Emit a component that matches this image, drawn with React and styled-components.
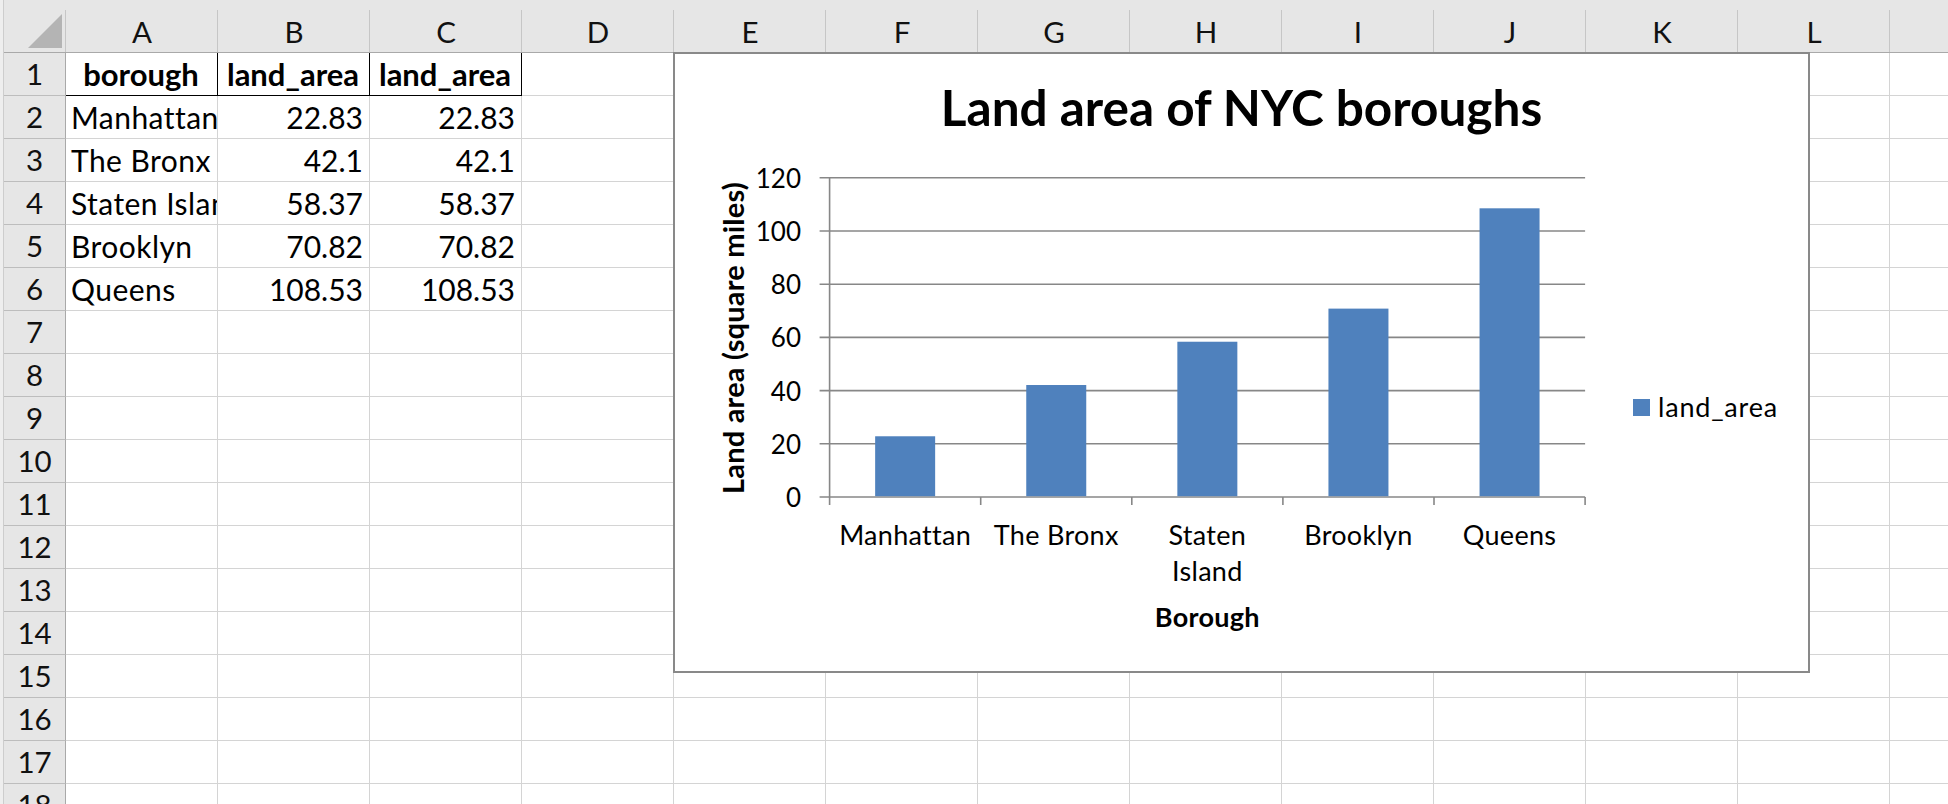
import React from "react";
import styled, { createGlobalStyle } from "styled-components";

const GlobalStyle = createGlobalStyle`
  html, body { margin: 0; padding: 0; background: #fff; }
  body { font-family: Lato, "Noto Sans", sans-serif; color: #000; overflow: hidden; }
`;

const COLS = ["A", "B", "C", "D", "E", "F", "G", "H", "I", "J", "K", "L", ""];
const ROW_COUNT = 18;
const DATA = [
  ["Manhattan", "22.83", "22.83", 22.83],
  ["The Bronx", "42.1", "42.1", 42.1],
  ["Staten Island", "58.37", "58.37", 58.37],
  ["Brooklyn", "70.82", "70.82", 70.82],
  ["Queens", "108.53", "108.53", 108.53],
];
const CATEGORY_LABELS = [["Manhattan"], ["The Bronx"], ["Staten", "Island"], ["Brooklyn"], ["Queens"]];

const Sheet = styled.div`
  position: relative;
  width: 1948px;
  height: 804px;
  overflow: hidden;
  display: grid;
  grid-template-columns: 4px 62px repeat(13, 152px);
  grid-template-rows: 53px repeat(${ROW_COUNT}, 43px);
`;

const Strip = styled.div`
  grid-row: 1 / -1;
  grid-column: 1;
  background: #eeeeee;
  border-right: 1px solid #cdcdcd;
  box-sizing: border-box;
`;

const HeaderBase = styled.div`
  position: relative;
  box-sizing: border-box;
  background: #e6e6e6;
  border-bottom: 1px solid #a9a9a9;
  &::after {
    content: "";
    position: absolute;
    right: 0;
    top: 10px;
    bottom: 0;
    width: 1px;
    background: #c6c6c6;
  }
`;

const Corner = styled(HeaderBase)`
  &::before {
    content: "";
    position: absolute;
    left: 24px;
    top: 14px;
    width: 34px;
    height: 34px;
    background: #b4b4b4;
    clip-path: polygon(100% 0, 100% 100%, 0 100%);
  }
`;

const ColHeader = styled(HeaderBase)`
  display: flex;
  align-items: flex-end;
  justify-content: center;
  padding-bottom: 3px;
  font-size: 29.5px;
  line-height: 35px;
  color: #111;
`;

const RowHeader = styled.div`
  box-sizing: border-box;
  background: #e6e6e6;
  border-right: 1px solid #a9a9a9;
  border-bottom: 1px solid #bdbdbd;
  display: flex;
  align-items: flex-end;
  justify-content: center;
  padding-bottom: 3px;
  font-size: 29.5px;
  line-height: 36px;
  color: #111;
`;

const Cell = styled.div`
  box-sizing: border-box;
  border-right: 1px solid ${(p) => (p.$boxed ? "#000" : "#d4d4d4")};
  border-bottom: 1px solid ${(p) => (p.$boxed ? "#000" : "#d4d4d4")};
  display: flex;
  align-items: flex-end;
  justify-content: ${(p) =>
    p.$align === "right" ? "flex-end" : p.$align === "center" ? "center" : "flex-start"};
  padding: 0 6px 3px 5px;
  font-size: ${(p) => (p.$bold ? "31px" : "30px")};
  letter-spacing: ${(p) => (p.$align === "left" ? "0.45px" : "0")};
  line-height: 36px;
  font-weight: ${(p) => (p.$bold ? 700 : 400)};
  white-space: nowrap;
  overflow: hidden;
`;

/* ---------- chart ---------- */

const ChartFrame = styled.div`
  position: absolute;
  left: 673px;
  top: 52px;
  width: 1137px;
  height: 621px;
  box-sizing: border-box;
  border: 2px solid #898989;
  background: #fff;
  display: flex;
  flex-direction: column;
`;

const ChartTitle = styled.div`
  padding-top: 24px;
  height: 82px;
  box-sizing: border-box;
  text-align: center;
  font-size: 49.5px;
  line-height: 58px;
  font-weight: 700;
`;

const ChartBody = styled.div`
  flex: 1;
  display: grid;
  grid-template-columns: 80px 846px 1fr;
`;

const YTitleCol = styled.div`
  padding: 42px 0 0 41px;
`;

const YTitle = styled.div`
  writing-mode: vertical-rl;
  transform: rotate(180deg);
  height: 320px;
  text-align: center;
  white-space: nowrap;
  font-size: 29px;
  letter-spacing: 0.2px;
  line-height: 34px;
  font-weight: 700;
`;

const PlotSvg = styled.svg`
  display: block;
  overflow: visible;
`;

const AxisText = styled.text`
  font-family: Lato, "Noto Sans", sans-serif;
  font-size: ${(p) => (p.$size ? p.$size : 27)}px;
  letter-spacing: ${(p) => (p.$spacing ? p.$spacing : 0)}px;
  font-weight: ${(p) => (p.$bold ? 700 : 400)};
  fill: #000;
`;

const Legend = styled.div`
  display: flex;
  align-items: center;
  align-self: start;
  gap: 8px;
  margin-top: 255px;
  padding-left: 32px;
  font-size: 27px;
  letter-spacing: 0.8px;
  line-height: 32px;
`;

const LegendSwatch = styled.span`
  width: 17px;
  height: 17px;
  background: #4f81bd;
`;

const BAR = "#4f81bd";
const GRID = "#878787";
const AXIS_X = 74.6;
const ZERO_Y = 361;
const UNIT = 2.66;
const CAT_W = 151.1;
const BAR_W = 60;
const PLOT_RIGHT = AXIS_X + CAT_W * 5;

function Plot() {
  const ticks = [0, 20, 40, 60, 80, 100, 120];
  return (
    <PlotSvg width="846" height="534" viewBox="0 0 846 534">
      {ticks.map((t) => {
        const y = ZERO_Y - t * UNIT;
        return (
          <g key={t}>
            <line x1={AXIS_X - 10} x2={PLOT_RIGHT} y1={y} y2={y} stroke={GRID} strokeWidth="1.6" />
            <AxisText $size={26} x="46" y={y + 10} textAnchor="end">
              {t}
            </AxisText>
          </g>
        );
      })}
      <line x1={AXIS_X} x2={AXIS_X} y1={ZERO_Y - 120 * UNIT} y2={ZERO_Y + 8} stroke={GRID} strokeWidth="1.6" />
      {[1, 2, 3, 4, 5].map((i) => (
        <line
          key={i}
          x1={AXIS_X + CAT_W * i}
          x2={AXIS_X + CAT_W * i}
          y1={ZERO_Y}
          y2={ZERO_Y + 8}
          stroke={GRID}
          strokeWidth="1.6"
        />
      ))}
      {DATA.map((d, i) => {
        const cx = AXIS_X + CAT_W * (i + 0.5);
        const h = d[3] * UNIT;
        return <rect key={d[0]} x={cx - BAR_W / 2} y={ZERO_Y - h} width={BAR_W} height={h - 0.8} fill={BAR} />;
      })}
      {CATEGORY_LABELS.map((lines, i) => {
        const cx = AXIS_X + CAT_W * (i + 0.5);
        return (
          <AxisText key={i} $spacing={0.3} x={cx} y="409" textAnchor="middle">
            {lines.map((l, j) => (
              <tspan key={j} x={cx} dy={j === 0 ? 0 : 36}>
                {l}
              </tspan>
            ))}
          </AxisText>
        );
      })}
      <AxisText $bold $spacing={0.3} x={AXIS_X + (CAT_W * 5) / 2} y="490.7" textAnchor="middle">
        Borough
      </AxisText>
    </PlotSvg>
  );
}

function Chart() {
  return (
    <ChartFrame>
      <ChartTitle>Land area of NYC boroughs</ChartTitle>
      <ChartBody>
        <YTitleCol>
          <YTitle>Land area (square miles)</YTitle>
        </YTitleCol>
        <Plot />
        <Legend>
          <LegendSwatch />
          <span>land_area</span>
        </Legend>
      </ChartBody>
    </ChartFrame>
  );
}

function cellContent(row, col) {
  if (row === 1) {
    if (col === 0) return { text: "borough", align: "center", bold: true, boxed: true };
    if (col === 1 || col === 2) return { text: "land_area", align: "center", bold: true, boxed: true };
    return null;
  }
  const d = DATA[row - 2];
  if (!d) return null;
  if (col === 0) return { text: d[0], align: "left" };
  if (col === 1) return { text: d[1], align: "right" };
  if (col === 2) return { text: d[2], align: "right" };
  return null;
}

export default function App() {
  const rows = Array.from({ length: ROW_COUNT }, (_, i) => i + 1);
  return (
    <>
      <GlobalStyle />
      <Sheet>
        <Strip />
        <Corner />
        {COLS.map((c, i) => (
          <ColHeader key={"h" + i}>{c}</ColHeader>
        ))}
        {rows.map((r) => (
          <React.Fragment key={r}>
            <RowHeader>{r}</RowHeader>
            {COLS.map((_, ci) => {
              const c = cellContent(r, ci);
              return (
                <Cell key={ci} $align={c?.align} $bold={c?.bold} $boxed={c?.boxed}>
                  {c?.text}
                </Cell>
              );
            })}
          </React.Fragment>
        ))}
        <Chart />
      </Sheet>
    </>
  );
}
